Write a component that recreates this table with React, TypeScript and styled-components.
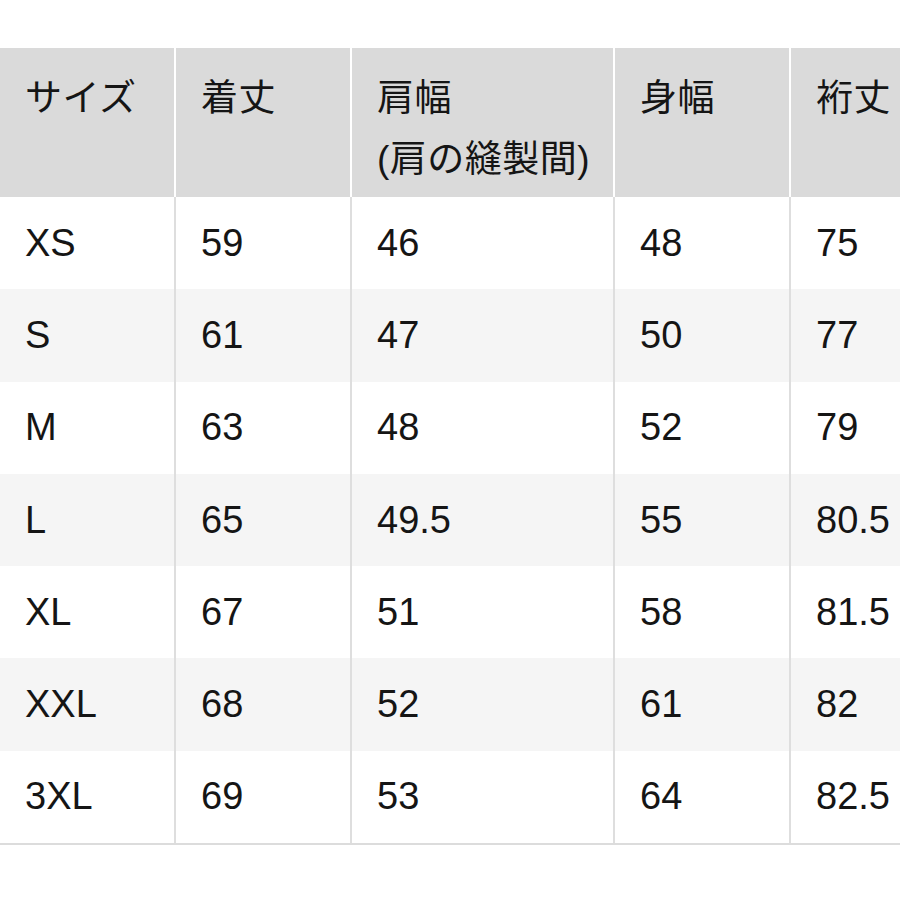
import styled, { createGlobalStyle } from 'styled-components';

const headers = ['サイズ', '着丈', '肩幅\n(肩の縫製間)', '身幅', '裄丈'];

const rows = [
  ['XS', '59', '46', '48', '75'],
  ['S', '61', '47', '50', '77'],
  ['M', '63', '48', '52', '79'],
  ['L', '65', '49.5', '55', '80.5'],
  ['XL', '67', '51', '58', '81.5'],
  ['XXL', '68', '52', '61', '82'],
  ['3XL', '69', '53', '64', '82.5']
];

const GlobalStyle = createGlobalStyle`
  html, body {
    margin: 0;
    padding: 0;
    background: #ffffff;
  }
  body {
    font-family: "Liberation Sans", "Noto Sans CJK JP", sans-serif;
    color: #151515;
  }
`;

const Page = styled.div`
  width: 900px;
  height: 900px;
  overflow: hidden;
  padding-top: 48px;
  box-sizing: border-box;
`;

const Table = styled.div`
  width: 970px;
  display: flex;
  flex-direction: column;
  border-bottom: 2px solid #dcdcdc;
`;

const Row = styled.div<{ $head?: boolean }>`
  display: grid;
  grid-template-columns: 174px 174px 261px 174px 1fr;
  column-gap: 2px;
  background: ${(p) => (p.$head ? '#ffffff' : '#dedede')};
  height: ${(p) => (p.$head ? '149px' : '92.3px')};
`;

const HeadCell = styled.div`
  background: #dadada;
  padding: 20px 0 0 25px;
  font-size: 37px;
  line-height: 61px;
  white-space: pre-line;
  letter-spacing: 0.5px;
`;

const Cell = styled.div<{ $alt?: boolean }>`
  background: ${(p) => (p.$alt ? '#f5f5f5' : '#ffffff')};
  display: flex;
  align-items: center;
  padding-left: 25px;
  font-size: 38px;
`;

export default function App() {
  return (
    <Page>
      <GlobalStyle />
      <Table>
        <Row $head>
          {headers.map((h) => (
            <HeadCell key={h}>{h}</HeadCell>
          ))}
        </Row>
        {rows.map((r, i) => (
          <Row key={r[0]}>
            {r.map((v, j) => (
              <Cell key={j} $alt={i % 2 === 1}>
                {v}
              </Cell>
            ))}
          </Row>
        ))}
      </Table>
    </Page>
  );
}
